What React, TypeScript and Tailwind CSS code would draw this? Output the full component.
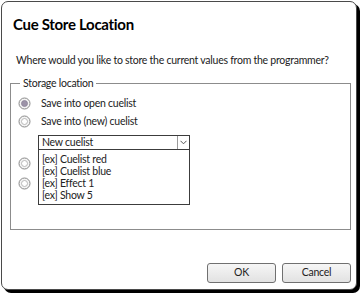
const font = { fontFamily: "Lato, 'Open Sans', sans-serif" }

function Radio({ checked }: { checked?: boolean }) {
  return (
    <svg width="13" height="13" viewBox="0 0 13 13" className="shrink-0">
      <circle cx="6.5" cy="6.5" r="5.5" fill="#f4f4f4" stroke="#8a8a8a" />
      <circle cx="6.5" cy="6.5" r="3" fill={checked ? "#9c93a8" : "#fff"} stroke={checked ? "#8a8296" : "#a8a8a8"} strokeWidth="0.8" />
    </svg>
  )
}

const items = ["[ex] Cuelist red", "[ex] Cuelist blue", "[ex] Effect 1", "[ex] Show 5"]

export default function App() {
  return (
    <div className="w-[362px] h-[295px] bg-white text-black tracking-[-0.25px]" style={font}>
      <div className="ml-px mt-px w-[356px] h-[289px] border border-[#4a4a4a] rounded-[7px] shadow-[3px_3px_0_#000] bg-white flex flex-col">
        <h1 className="pl-[11px] pt-[12px] text-[15px] font-bold leading-5 tracking-[-0.3px]">Cue Store Location</h1>
        <p className="pl-[14px] mt-[18px] text-[10.5px] leading-4 text-[#222] whitespace-nowrap">
          Where would you like to store the current values from the programmer?
        </p>
        <fieldset className="relative ml-[8px] mr-[5px] mt-[7px] h-[155px] border border-[#8c8c8c] pl-[7px] pr-[12px] pt-[6px]">
          <legend className="ml-[2px] px-[3px] text-[10.5px] leading-4 text-[#222]">Storage location</legend>
          <div className="flex flex-col text-[10.5px] leading-[13px] text-[#222]">
            <label className="flex items-center gap-[10px]">
              <Radio checked />
              <span>Save into open cuelist</span>
            </label>
            <label className="mt-[5px] flex items-center gap-[10px]">
              <Radio />
              <span>Save into (new) cuelist</span>
            </label>
            <label className="mt-[29px] flex items-center gap-[10px]">
              <Radio />
            </label>
            <label className="mt-[7px] flex items-center gap-[10px]">
              <Radio />
            </label>
          </div>
          <div className="absolute left-[27px] top-[44px] w-[152px] text-[10.5px] text-[#222]">
            <div className="flex h-[15px] border border-[#3c3c3c] bg-white">
              <span className="flex-1 pl-[3px] leading-[13px]">New cuelist</span>
              <span className="w-[12px] border-l border-[#9a9a9a] flex items-center justify-center">
                <svg width="7" height="5" viewBox="0 0 7 5">
                  <path d="M0.5 0.8 L3.5 3.8 L6.5 0.8" fill="none" stroke="#555" strokeWidth="1" />
                </svg>
              </span>
            </div>
            <div className="border border-t-0 border-[#3c3c3c] bg-white pl-[3px] pt-[3px] pb-[3px]">
              {items.map((it) => (
                <div key={it} className="leading-[12px]">{it}</div>
              ))}
            </div>
          </div>
        </fieldset>
        <div className="flex justify-end gap-[6px] pr-[5px] mt-auto mb-[6px]">
          <button className="w-[69px] h-[20px] border border-[#707070] rounded-[3px] bg-gradient-to-b from-[#f6f6f6] to-[#e2e2e2] text-[10.5px] text-[#222]">OK</button>
          <button className="w-[69px] h-[20px] border border-[#707070] rounded-[3px] bg-gradient-to-b from-[#f6f6f6] to-[#e2e2e2] text-[10.5px] text-[#222]">Cancel</button>
        </div>
      </div>
    </div>
  )
}
